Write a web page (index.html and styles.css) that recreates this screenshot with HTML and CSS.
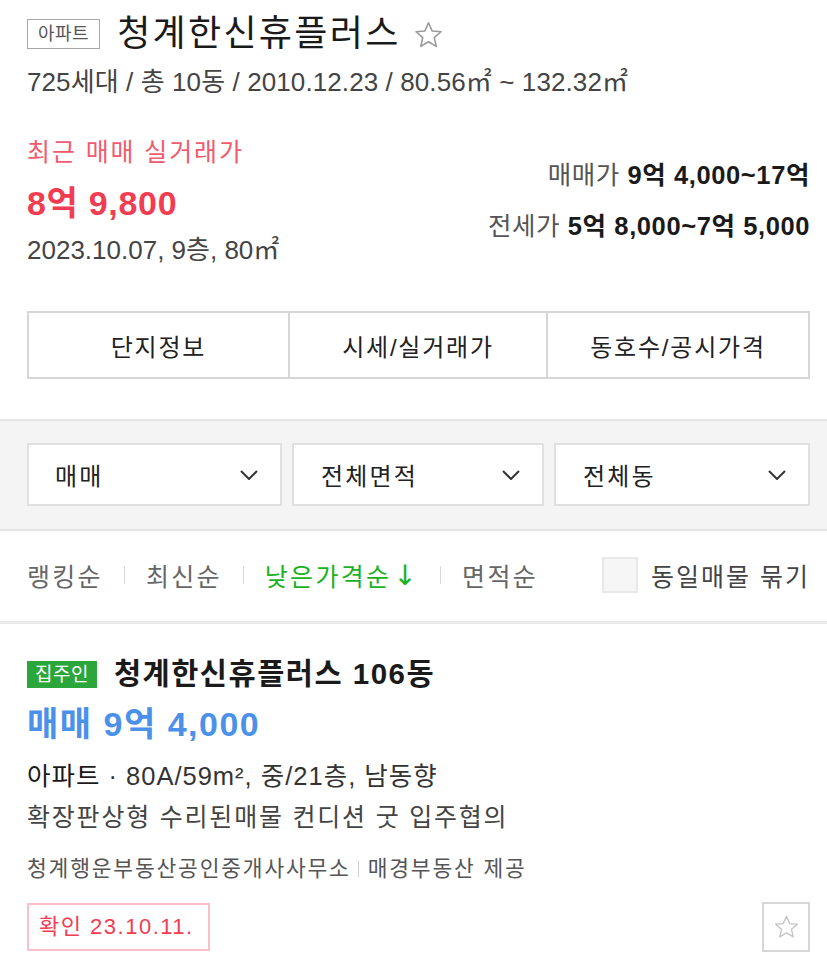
FILE: index.html
```html
<!DOCTYPE html>
<html lang="ko">
<head>
<meta charset="utf-8">
<title>청계한신휴플러스</title>
<link rel="stylesheet" href="styles.css">
</head>
<body>
<div class="page">
  <header class="complex">
    <div class="title-row">
      <span class="type-badge">아파트</span>
      <h1 class="title">청계한신휴플러스</h1>
      <svg class="title-star" viewBox="0 0 24 24" width="31" height="30"><path d="M12 2.2l2.9 6.6 7.1.6-5.4 4.7 1.6 7-6.2-3.7-6.2 3.7 1.6-7L2 9.4l7.1-.6z" fill="none" stroke="#9a9a9a" stroke-width="1.3" stroke-linejoin="round"/></svg>
    </div>
    <p class="meta">725세대 / 총 10동 / 2010.12.23 / 80.56㎡ ~ 132.32㎡</p>

    <div class="price-area">
      <div class="recent">
        <p class="recent-label">최근 매매 실거래가</p>
        <p class="recent-price">8억 9,800</p>
        <p class="recent-info">2023.10.07, 9층, 80㎡</p>
      </div>
      <div class="ranges">
        <p class="range"><span class="range-label">매매가</span> <b>9억 4,000~17억</b></p>
        <p class="range"><span class="range-label">전세가</span> <b>5억 8,000~7억 5,000</b></p>
      </div>
    </div>

    <nav class="tabs">
      <a class="tab">단지정보</a>
      <a class="tab">시세/실거래가</a>
      <a class="tab">동호수/공시가격</a>
    </nav>
  </header>

  <section class="filters">
    <div class="select"><span>매매</span><svg class="chev" viewBox="0 0 18 10" width="18" height="10"><path d="M1 1l8 8 8-8" fill="none" stroke="#333" stroke-width="2"/></svg></div>
    <div class="select"><span>전체면적</span><svg class="chev" viewBox="0 0 18 10" width="18" height="10"><path d="M1 1l8 8 8-8" fill="none" stroke="#333" stroke-width="2"/></svg></div>
    <div class="select"><span>전체동</span><svg class="chev" viewBox="0 0 18 10" width="18" height="10"><path d="M1 1l8 8 8-8" fill="none" stroke="#333" stroke-width="2"/></svg></div>
  </section>

  <div class="sort">
    <ul class="sort-list">
      <li>랭킹순</li>
      <li class="sep"></li>
      <li>최신순</li>
      <li class="sep"></li>
      <li class="active">낮은가격순<span class="arrow">↓</span></li>
      <li class="sep"></li>
      <li>면적순</li>
    </ul>
    <label class="same"><span class="checkbox"></span>동일매물 묶기</label>
  </div>

  <article class="item">
    <div class="item-title-row">
      <span class="owner-badge">집주인</span>
      <h2 class="item-title">청계한신휴플러스 106동</h2>
    </div>
    <p class="item-price">매매 9억 4,000</p>
    <p class="item-spec"><span class="spec-type">아파트</span> · 80A/59m², 중/21층, 남동향</p>
    <p class="item-desc">확장판상형 수리된매물 컨디션 굿 입주협의</p>
    <p class="item-agent">청계행운부동산공인중개사사무소<span class="agent-sep"></span>매경부동산 제공</p>
    <div class="item-bottom">
      <span class="confirm">확인 23.10.11.</span>
      <button class="fav"><svg viewBox="0 0 24 24" width="27" height="26"><path d="M12 2.2l2.9 6.6 7.1.6-5.4 4.7 1.6 7-6.2-3.7-6.2 3.7 1.6-7L2 9.4l7.1-.6z" fill="none" stroke="#c4c4c4" stroke-width="1.2" stroke-linejoin="round"/></svg></button>
    </div>
  </article>
</div>
</body>
</html>
```

FILE: styles.css
```css
* { box-sizing: border-box; }
html, body { margin: 0; padding: 0; background: #fff; }
body {
  font-family: "Liberation Sans", "Noto Sans CJK KR", sans-serif;
  color: #222;
  width: 827px;
}
p, h1, h2, ul { margin: 0; padding: 0; }

.complex { padding: 14px 17px 0 27px; }

.title-row { display: flex; align-items: center; height: 40px; }
.type-badge {
  font-size: 18px;
  color: #555;
  border: 1px solid #a8a8a8;
  height: 30px;
  line-height: 28px;
  padding: 0 10px;
  margin-right: 17px;
  letter-spacing: 0.5px;
}
.title { font-size: 36px; font-weight: 400; color: #1a1a1a; letter-spacing: 2.3px; line-height: 40px; }
.title-star { margin-left: 12px; margin-top: 2px; }

.meta { font-size: 26px; color: #444; line-height: 30px; margin-top: 13px; letter-spacing: 0.1px; }

.price-area { display: flex; justify-content: space-between; margin-top: 40px; }
.recent-label { font-size: 25px; color: #f25a6e; line-height: 30px; letter-spacing: 1.9px; }
.recent-price { font-size: 34px; font-weight: 700; color: #f23c52; line-height: 40px; margin-top: 16px; letter-spacing: 0.7px; }
.recent-info { font-size: 26px; color: #444; line-height: 30px; margin-top: 12px; letter-spacing: 0; }

.ranges { text-align: right; padding-top: 23px; }
.range { font-size: 25.5px; line-height: 30px; color: #222; letter-spacing: 0.6px; }
.range + .range { margin-top: 21px; }
.range-label { color: #555; }
.range b { font-weight: 700; color: #1a1a1a; }

.tabs {
  display: grid;
  grid-template-columns: 259px 258px 1fr;
  border: 2px solid #d6d6d6;
  height: 68px;
  margin-top: 46px;
}
.tab {
  display: flex; align-items: center; justify-content: center;
  font-size: 24px; color: #222; letter-spacing: 1.8px;
}
.tab + .tab { border-left: 2px solid #d6d6d6; }

.filters {
  margin-top: 40px;
  background: #f4f4f4;
  border-top: 2px solid #e4e4e4;
  border-bottom: 2px solid #e4e4e4;
  padding: 22px 17px 23px 27px;
  display: grid;
  grid-template-columns: 255px 252px 1fr;
  column-gap: 10px;
}
.select {
  height: 63px;
  background: #fff;
  border: 2px solid #e0e0e0;
  display: flex; align-items: center; justify-content: space-between;
  padding: 0 22px 0 26px;
  font-size: 24px; color: #222; letter-spacing: 2.2px;
}
.select:nth-child(2), .select:nth-child(3) { padding-left: 27px; }

.sort {
  display: flex; justify-content: space-between;
  padding: 24px 17px 0 27px;
  height: 93px;
  border-bottom: 3px solid #eaeaea;
  align-items: flex-start;
}
.sort-list { list-style: none; display: flex; align-items: center; height: 40px; }
.sort-list li { font-size: 25px; color: #666; letter-spacing: 2.3px; display: flex; align-items: center; }
.sort-list li.sep { width: 1px; height: 18px; background: #d8d8d8; margin: 0 21px; }
.sort-list li.active { color: #1bb21f; }
.arrow { font-family: "DejaVu Sans", sans-serif; font-size: 28px; margin-left: 2px; }
.same { display: flex; align-items: center; height: 40px; font-size: 25px; color: #444; letter-spacing: 2px; }
.checkbox {
  width: 36px; height: 36px;
  border: 2px solid #e8e8e8; background: #f6f6f6;
  margin-right: 13px;
}

.item { padding: 32px 17px 0 27px; }
.item-title-row { display: flex; align-items: center; height: 36px; }
.owner-badge {
  background: #2aa63a; color: #fff;
  font-size: 19px; height: 27px; line-height: 27px;
  padding: 0 8px; margin-right: 17px; letter-spacing: 0.5px;
}
.item-title { font-size: 29.5px; font-weight: 700; color: #1a1a1a; letter-spacing: 1.5px; line-height: 36px; }
.item-price { font-size: 34px; font-weight: 700; color: #4b91ea; line-height: 40px; margin-top: 12px; letter-spacing: 1.5px; }
.item-spec { font-size: 25.5px; color: #333; line-height: 32px; margin-top: 16px; letter-spacing: 1px; }
.spec-type { color: #1a1a1a; }
.item-desc { font-size: 25px; color: #444; line-height: 32px; margin-top: 9px; letter-spacing: 1.8px; }
.item-agent { font-size: 21.5px; color: #555; line-height: 28px; margin-top: 22px; display: flex; align-items: center; letter-spacing: 1.8px; }
.agent-sep { width: 1px; height: 16px; background: #ccc; margin: 0 9px 0 7px; }
.item-bottom { display: flex; justify-content: space-between; align-items: center; margin-top: 19px; }
.confirm {
  font-size: 22px; color: #f23c52;
  border: 2px solid #fbc0c8;
  height: 48px; line-height: 44px;
  padding: 0 14px 0 10px; letter-spacing: 1.5px;
}
.fav {
  width: 48px; height: 50px;
  border: 2px solid #d6d6d6; background: #fff;
  display: flex; align-items: center; justify-content: center;
  padding: 0;
}
```
